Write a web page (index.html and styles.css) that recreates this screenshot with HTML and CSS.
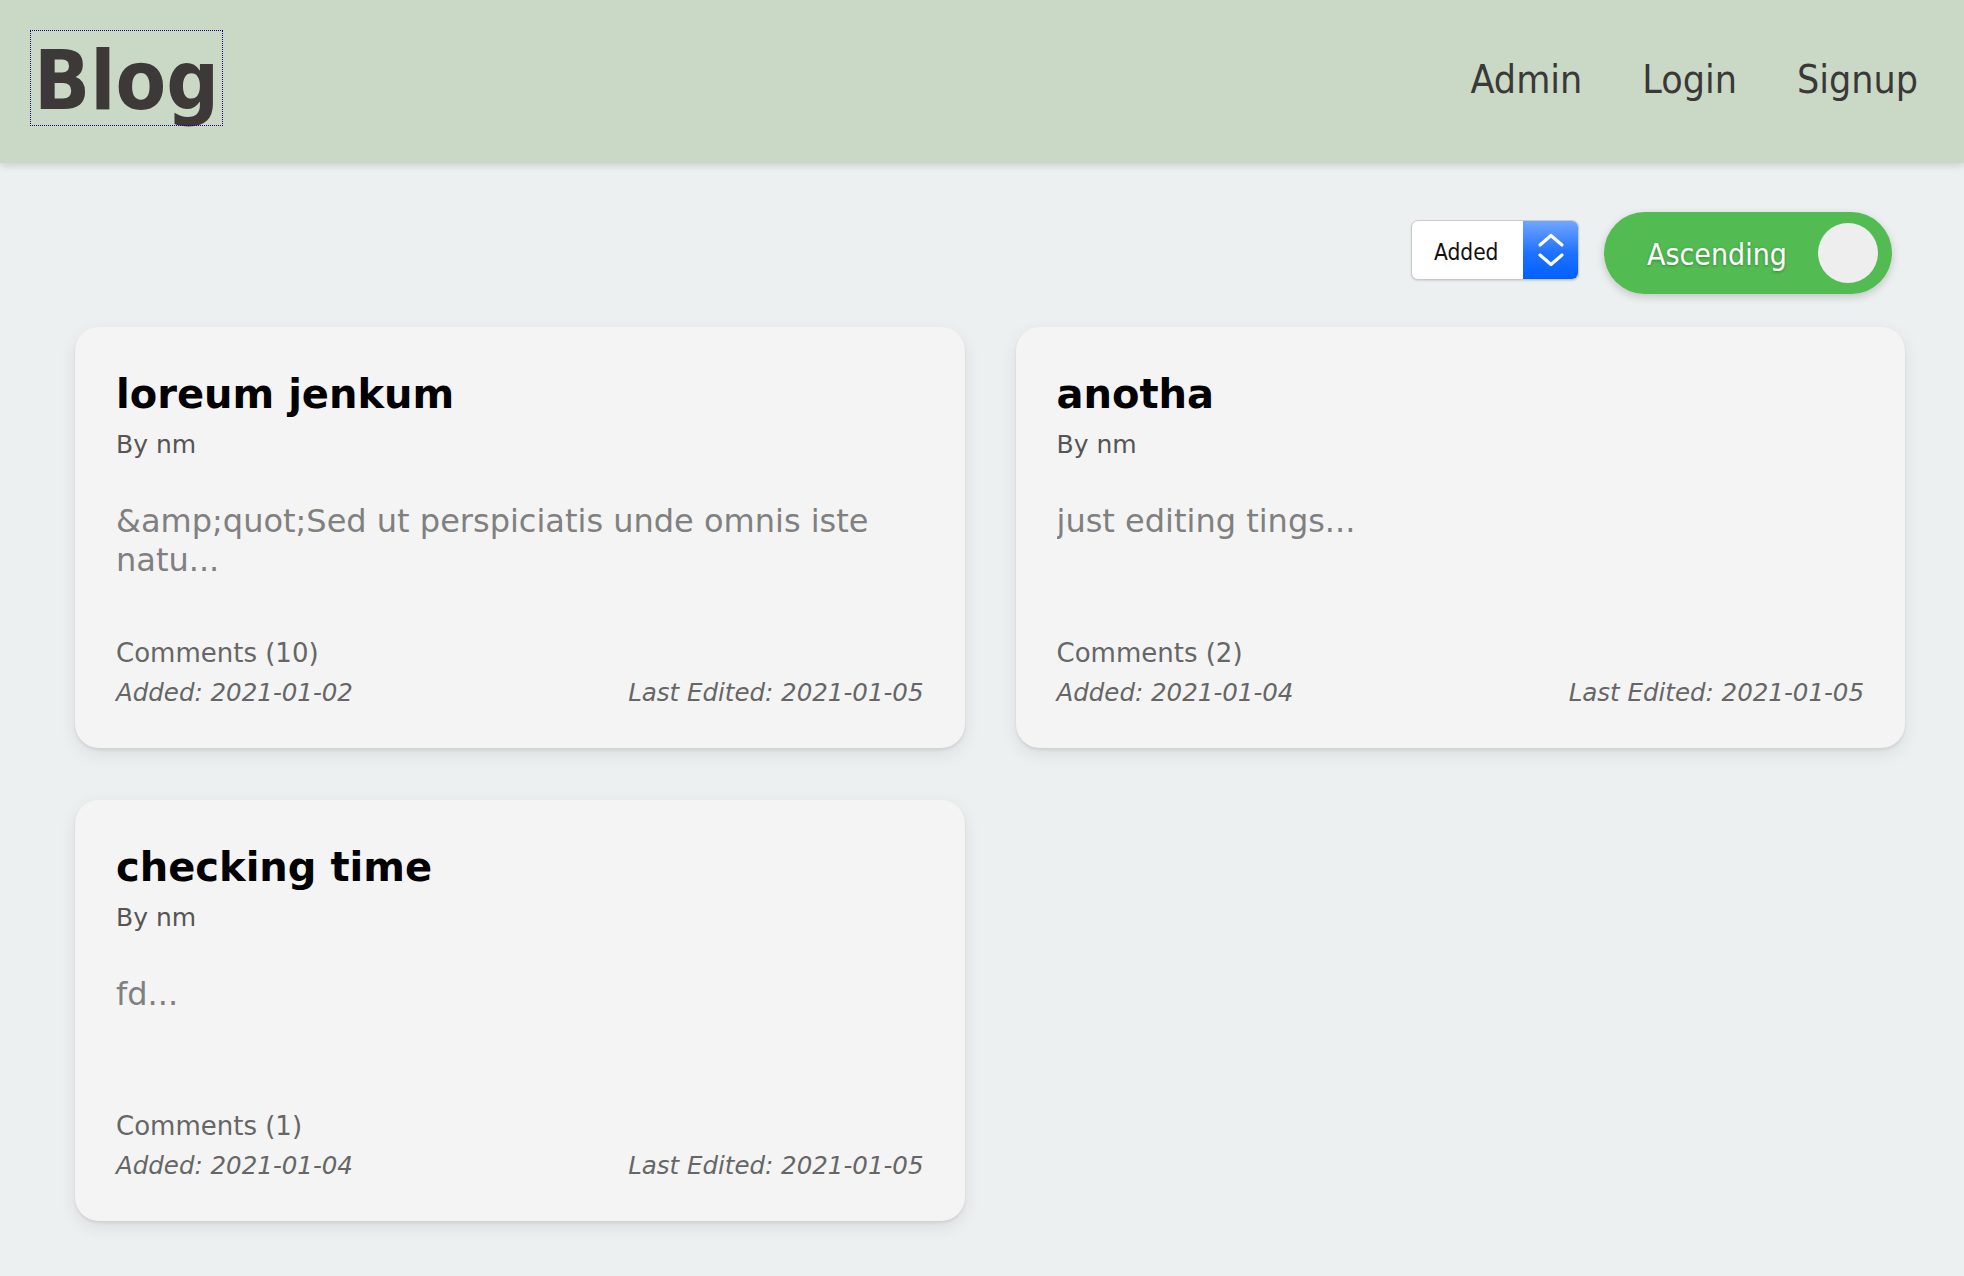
FILE: index.html
```html
<!DOCTYPE html>
<html lang="en">
<head>
<meta charset="utf-8">
<title>Blog</title>
<link rel="stylesheet" href="styles.css">
</head>
<body>
<header class="topbar">
  <a class="logo" href="#">Blog</a>
  <nav class="nav">
    <a href="#">Admin</a>
    <a href="#">Login</a>
    <a href="#">Signup</a>
  </nav>
</header>

<div class="controls">
  <div class="select">
    <span class="select-label">Added</span>
    <span class="select-arrows">
      <svg width="28" height="34" viewBox="0 0 28 34" fill="none" stroke="#fff" stroke-width="3.2" stroke-linecap="round" stroke-linejoin="round">
        <polyline points="3,12 14,2.5 25,12"/>
        <polyline points="3,22 14,31.5 25,22"/>
      </svg>
    </span>
  </div>
  <div class="toggle">
    <span class="toggle-text">Ascending</span>
    <span class="knob"></span>
  </div>
</div>

<main class="posts">
  <article class="card">
    <h2 class="card-title">loreum jenkum</h2>
    <p class="card-author">By nm</p>
    <p class="card-excerpt">&amp;amp;quot;Sed ut perspiciatis unde omnis iste natu...</p>
    <p class="card-comments">Comments (10)</p>
    <div class="card-dates">
      <span>Added: 2021-01-02</span>
      <span>Last Edited: 2021-01-05</span>
    </div>
  </article>
  <article class="card">
    <h2 class="card-title">anotha</h2>
    <p class="card-author">By nm</p>
    <p class="card-excerpt">just editing tings...</p>
    <p class="card-comments">Comments (2)</p>
    <div class="card-dates">
      <span>Added: 2021-01-04</span>
      <span>Last Edited: 2021-01-05</span>
    </div>
  </article>
  <article class="card">
    <h2 class="card-title">checking time</h2>
    <p class="card-author">By nm</p>
    <p class="card-excerpt">fd...</p>
    <p class="card-comments">Comments (1)</p>
    <div class="card-dates">
      <span>Added: 2021-01-04</span>
      <span>Last Edited: 2021-01-05</span>
    </div>
  </article>
</main>
</body>
</html>
```

FILE: styles.css
```css
* { box-sizing: border-box; }

html, body {
  margin: 0;
  padding: 0;
}

body {
  background: #edf0f0;
  font-family: "DejaVu Sans", Verdana, sans-serif;
  color: #333;
  min-height: 1276px;
}

.topbar {
  height: 163px;
  background: #cad9c5;
  display: flex;
  align-items: flex-start;
  justify-content: space-between;
  padding: 31px 46px 0 31px;
  box-shadow: 0 2px 8px rgba(0, 0, 0, 0.16);
  position: relative;
  z-index: 1;
}

.logo {
  display: block;
  height: 94px;
  padding: 6px 3px 0 3px;
  font-family: "DejaVu Sans Condensed", "DejaVu Sans", sans-serif;
  font-weight: bold;
  font-size: 82px;
  line-height: 88px;
  color: #3d3939;
  text-decoration: none;
  outline: 1px dotted #22008a;
}

.nav {
  display: flex;
  gap: 60px;
  margin-top: 26px;
}

.nav a {
  font-family: "DejaVu Sans Condensed", "DejaVu Sans", sans-serif;
  font-size: 39px;
  line-height: 46px;
  color: #3b3838;
  text-decoration: none;
}

.controls {
  display: flex;
  justify-content: flex-end;
  align-items: center;
  gap: 25px;
  height: 82px;
  margin: 49px 72px 33px 0;
}

.select {
  display: flex;
  width: 168px;
  height: 60px;
  margin-top: -6px;
  background: #fff;
  border: 1px solid #c9c9c9;
  border-radius: 7px;
  box-shadow: 0 1px 2px rgba(0, 0, 0, 0.12);
  overflow: hidden;
}

.select-label {
  flex: 1;
  display: flex;
  align-items: center;
  padding-left: 22px;
  padding-top: 3px;
  font-family: "DejaVu Sans Condensed", "DejaVu Sans", sans-serif;
  font-size: 22.5px;
  color: #111;
}

.select-arrows {
  width: 55px;
  display: flex;
  align-items: center;
  justify-content: center;
  background: linear-gradient(#70a6ff, #1f72ff 55%, #0060ff);
}

.toggle {
  display: flex;
  align-items: center;
  width: 288px;
  height: 82px;
  padding-left: 43px;
  padding-right: 14px;
  border-radius: 41px;
  background: #52bb52;
  box-shadow: 0 3px 8px rgba(0, 0, 0, 0.18);
}

.toggle-text {
  font-family: "DejaVu Sans Condensed", "DejaVu Sans", sans-serif;
  font-size: 30px;
  padding-top: 2px;
  color: #fff;
  text-shadow: 0 1px 3px rgba(0, 0, 0, 0.3);
}

.knob {
  margin-left: auto;
  width: 60px;
  height: 60px;
  border-radius: 50%;
  background: #eeeeee;
}

.posts {
  display: grid;
  grid-template-columns: 1fr 1fr;
  column-gap: 51px;
  row-gap: 52px;
  padding: 0 59px 40px 75px;
}

.card {
  background: #f4f4f4;
  border-radius: 24px;
  padding: 43px 41px 40px 41px;
  box-shadow: 0 2px 3px rgba(0, 0, 0, 0.08), 0 6px 18px rgba(0, 0, 0, 0.08);
}

.card p { margin: 0; }

.card-title {
  margin: 0;
  font-size: 40px;
  line-height: 48px;
  font-weight: bold;
  color: #000;
}

.card-author {
  margin-top: 12px !important;
  font-size: 25px;
  line-height: 30px;
  color: #555;
}

.card-excerpt {
  margin-top: 42px !important;
  height: 78px;
  overflow: hidden;
  font-size: 32px;
  line-height: 39px;
  color: #808080;
}

.card-comments {
  margin-top: 59px !important;
  font-size: 26px;
  line-height: 29px;
  color: #666;
}

.card-dates {
  display: flex;
  justify-content: space-between;
  margin-top: 10px;
  font-size: 24.5px;
  line-height: 30px;
  font-style: italic;
  color: #666;
}
```
